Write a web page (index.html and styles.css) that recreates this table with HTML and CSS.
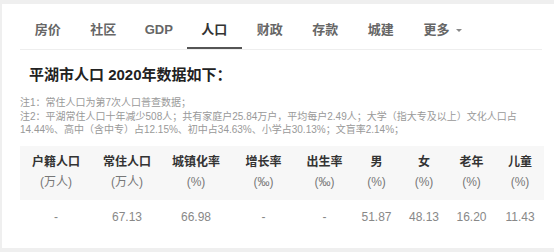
FILE: index.html
```html
<!DOCTYPE html>
<html lang="zh-CN">
<head>
<meta charset="utf-8">
<link rel="stylesheet" href="styles.css">
</head>
<body>
<div class="card">
  <nav class="tabs">
    <span class="tab">房价</span>
    <span class="tab">社区</span>
    <span class="tab">GDP</span>
    <span class="tab active">人口</span>
    <span class="tab">财政</span>
    <span class="tab">存款</span>
    <span class="tab">城建</span>
    <span class="tab more">更多<span class="caret"></span></span>
  </nav>
  <h2 class="title">平湖市人口 2020年数据如下：</h2>
  <div class="notes">
    <p>注1：常住人口为第7次人口普查数据；</p>
    <p>注2：平湖常住人口十年减少508人；共有家庭户25.84万户，平均每户2.49人；大学（指大专及以上）文化人口占<br>14.44%、高中（含中专）占12.15%、初中占34.63%、小学占30.13%；文盲率2.14%；</p>
  </div>
  <table class="data">
    <thead>
      <tr>
        <th class="c1">户籍人口<span class="unit">(万人)</span></th>
        <th class="c2">常住人口<span class="unit">(万人)</span></th>
        <th class="c3">城镇化率<span class="unit">(%)</span></th>
        <th class="c4">增长率<span class="unit">(‰)</span></th>
        <th class="c5">出生率<span class="unit">(‰)</span></th>
        <th class="c6">男<span class="unit">(%)</span></th>
        <th class="c7">女<span class="unit">(%)</span></th>
        <th class="c8">老年<span class="unit">(%)</span></th>
        <th class="c9">儿童<span class="unit">(%)</span></th>
      </tr>
    </thead>
    <tbody>
      <tr>
        <td>-</td>
        <td>67.13</td>
        <td>66.98</td>
        <td>-</td>
        <td>-</td>
        <td>51.87</td>
        <td>48.13</td>
        <td>16.20</td>
        <td>11.43</td>
      </tr>
    </tbody>
  </table>
</div>
</body>
</html>
```
FILE: styles.css
```css
html, body {
  margin: 0;
  padding: 0;
}
body {
  background: #efefef;
  font-family: "Liberation Sans", "Noto Sans CJK SC", sans-serif;
  width: 554px;
  height: 252px;
  overflow: hidden;
}
.card {
  background: #fff;
  margin: 4px 0 0 2px;
  padding: 0 12px 14px 16px;
}
.tabs {
  display: flex;
  margin-left: 2px;
  border-bottom: 1px solid #eeeeee;
}
.tab {
  box-sizing: border-box;
  height: 45px;
  padding: 17px 0 8px;
  width: 55.5px;
  text-align: center;
  font-size: 13px;
  line-height: 18px;
  font-weight: bold;
  color: #666;
  border-bottom: 2px solid transparent;
}
.tab.active {
  color: #333;
  border-bottom-color: #555;
}
.tab.more {
  text-align: left;
  padding-left: 15px;
  width: auto;
}
.caret {
  display: inline-block;
  width: 0;
  height: 0;
  margin-left: 6px;
  vertical-align: middle;
  border-left: 3px solid transparent;
  border-right: 3px solid transparent;
  border-top: 3px solid #888;
}
.title {
  margin: 14px 0 0 11px;
  font-size: 15px;
  line-height: 22px;
  font-weight: bold;
  color: #222;
}
.notes {
  margin: 10px 0 0 2px;
  font-size: 10px;
  line-height: 13.5px;
  color: #999;
  white-space: nowrap;
}
.notes p {
  margin: 0;
}
.data {
  margin: 9.5px 0 0 2px;
  width: 524px;
  table-layout: fixed;
  border-collapse: collapse;
  text-align: center;
  font-size: 12px;
}
.data th {
  background: #f7f7f7;
  padding: 6px 0 8px;
  line-height: 20px;
  font-weight: bold;
  color: #333;
}
.unit {
  display: block;
  font-weight: normal;
  color: #777;
}
.data td {
  height: 34px;
  padding: 0;
  color: #888;
}
.c1 { width: 72px; }
.c2 { width: 70px; }
.c3 { width: 68px; }
.c4 { width: 67px; }
.c5 { width: 55px; }
.c6 { width: 49px; }
.c7 { width: 46px; }
.c8 { width: 49px; }
.c9 { width: 48px; }
```
